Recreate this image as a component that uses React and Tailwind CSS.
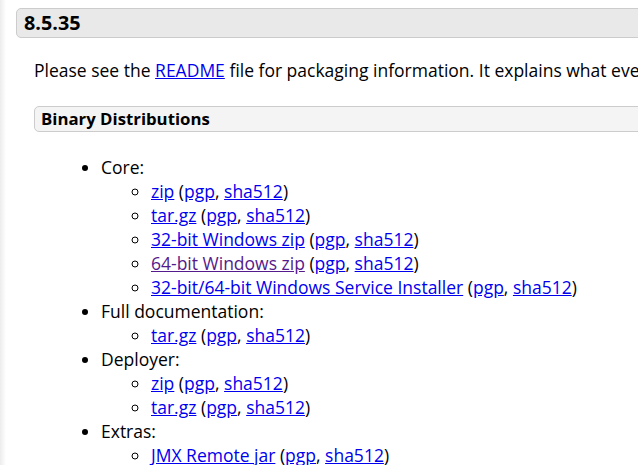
const link = "text-[#0000ee] underline";
const visited = "text-[#551a8b] underline";

function Sigs() {
  return (
    <>
      {" ("}
      <a href="#" className={link}>pgp</a>
      {", "}
      <a href="#" className={link}>sha512</a>
      {")"}
    </>
  );
}

function Item({ label, visitedLink }) {
  return (
    <li>
      <a href="#" className={visitedLink ? visited : link}>{label}</a>
      <Sigs />
    </li>
  );
}

const groups = [
  { name: "Core:", items: ["zip", "tar.gz", "32-bit Windows zip", "64-bit Windows zip", "32-bit/64-bit Windows Service Installer"] },
  { name: "Full documentation:", items: ["tar.gz"] },
  { name: "Deployer:", items: ["zip", "tar.gz"] },
  { name: "Extras:", items: ["JMX Remote jar"] },
];

export default function App() {
  return (
    <div className="w-[638px] h-[465px] overflow-hidden bg-white text-black flex font-['Open_Sans',sans-serif] text-[17.5px] leading-[24px]">
      <div className="w-[6px] shrink-0 bg-gradient-to-r from-[#ececec] to-white" />
      <div className="w-[1000px] shrink-0 pl-[10px] pt-[8px]">
        <h3 className="h-[30px] border border-[#cccccc] bg-[#e9e9e9] rounded-[5px] pl-[7px] text-[19.8px] leading-[28px] font-bold">
          8.5.35
        </h3>
        <div className="pl-[18px]">
          <p className="mt-[20px] whitespace-nowrap">
            Please see the <a href="#" className={link}>README</a> file for packaging information. It explains what every
          </p>
          <h4 className="mt-[24px] h-[26px] border border-[#cccccc] bg-[#f4f4f4] rounded-[5px] pl-[6px] font-bold text-[16.8px] leading-[24px]">
            Binary Distributions
          </h4>
          <ul className="mt-[23px] pl-[67px] list-disc">
            {groups.map((g) => (
              <li key={g.name}>
                {g.name}
                <ul className="pl-[50px] list-[circle]">
                  {g.items.map((it) => (
                    <Item key={it} label={it} visitedLink={g.name === "Core:" && it === "64-bit Windows zip"} />
                  ))}
                </ul>
              </li>
            ))}
          </ul>
        </div>
      </div>
    </div>
  );
}
